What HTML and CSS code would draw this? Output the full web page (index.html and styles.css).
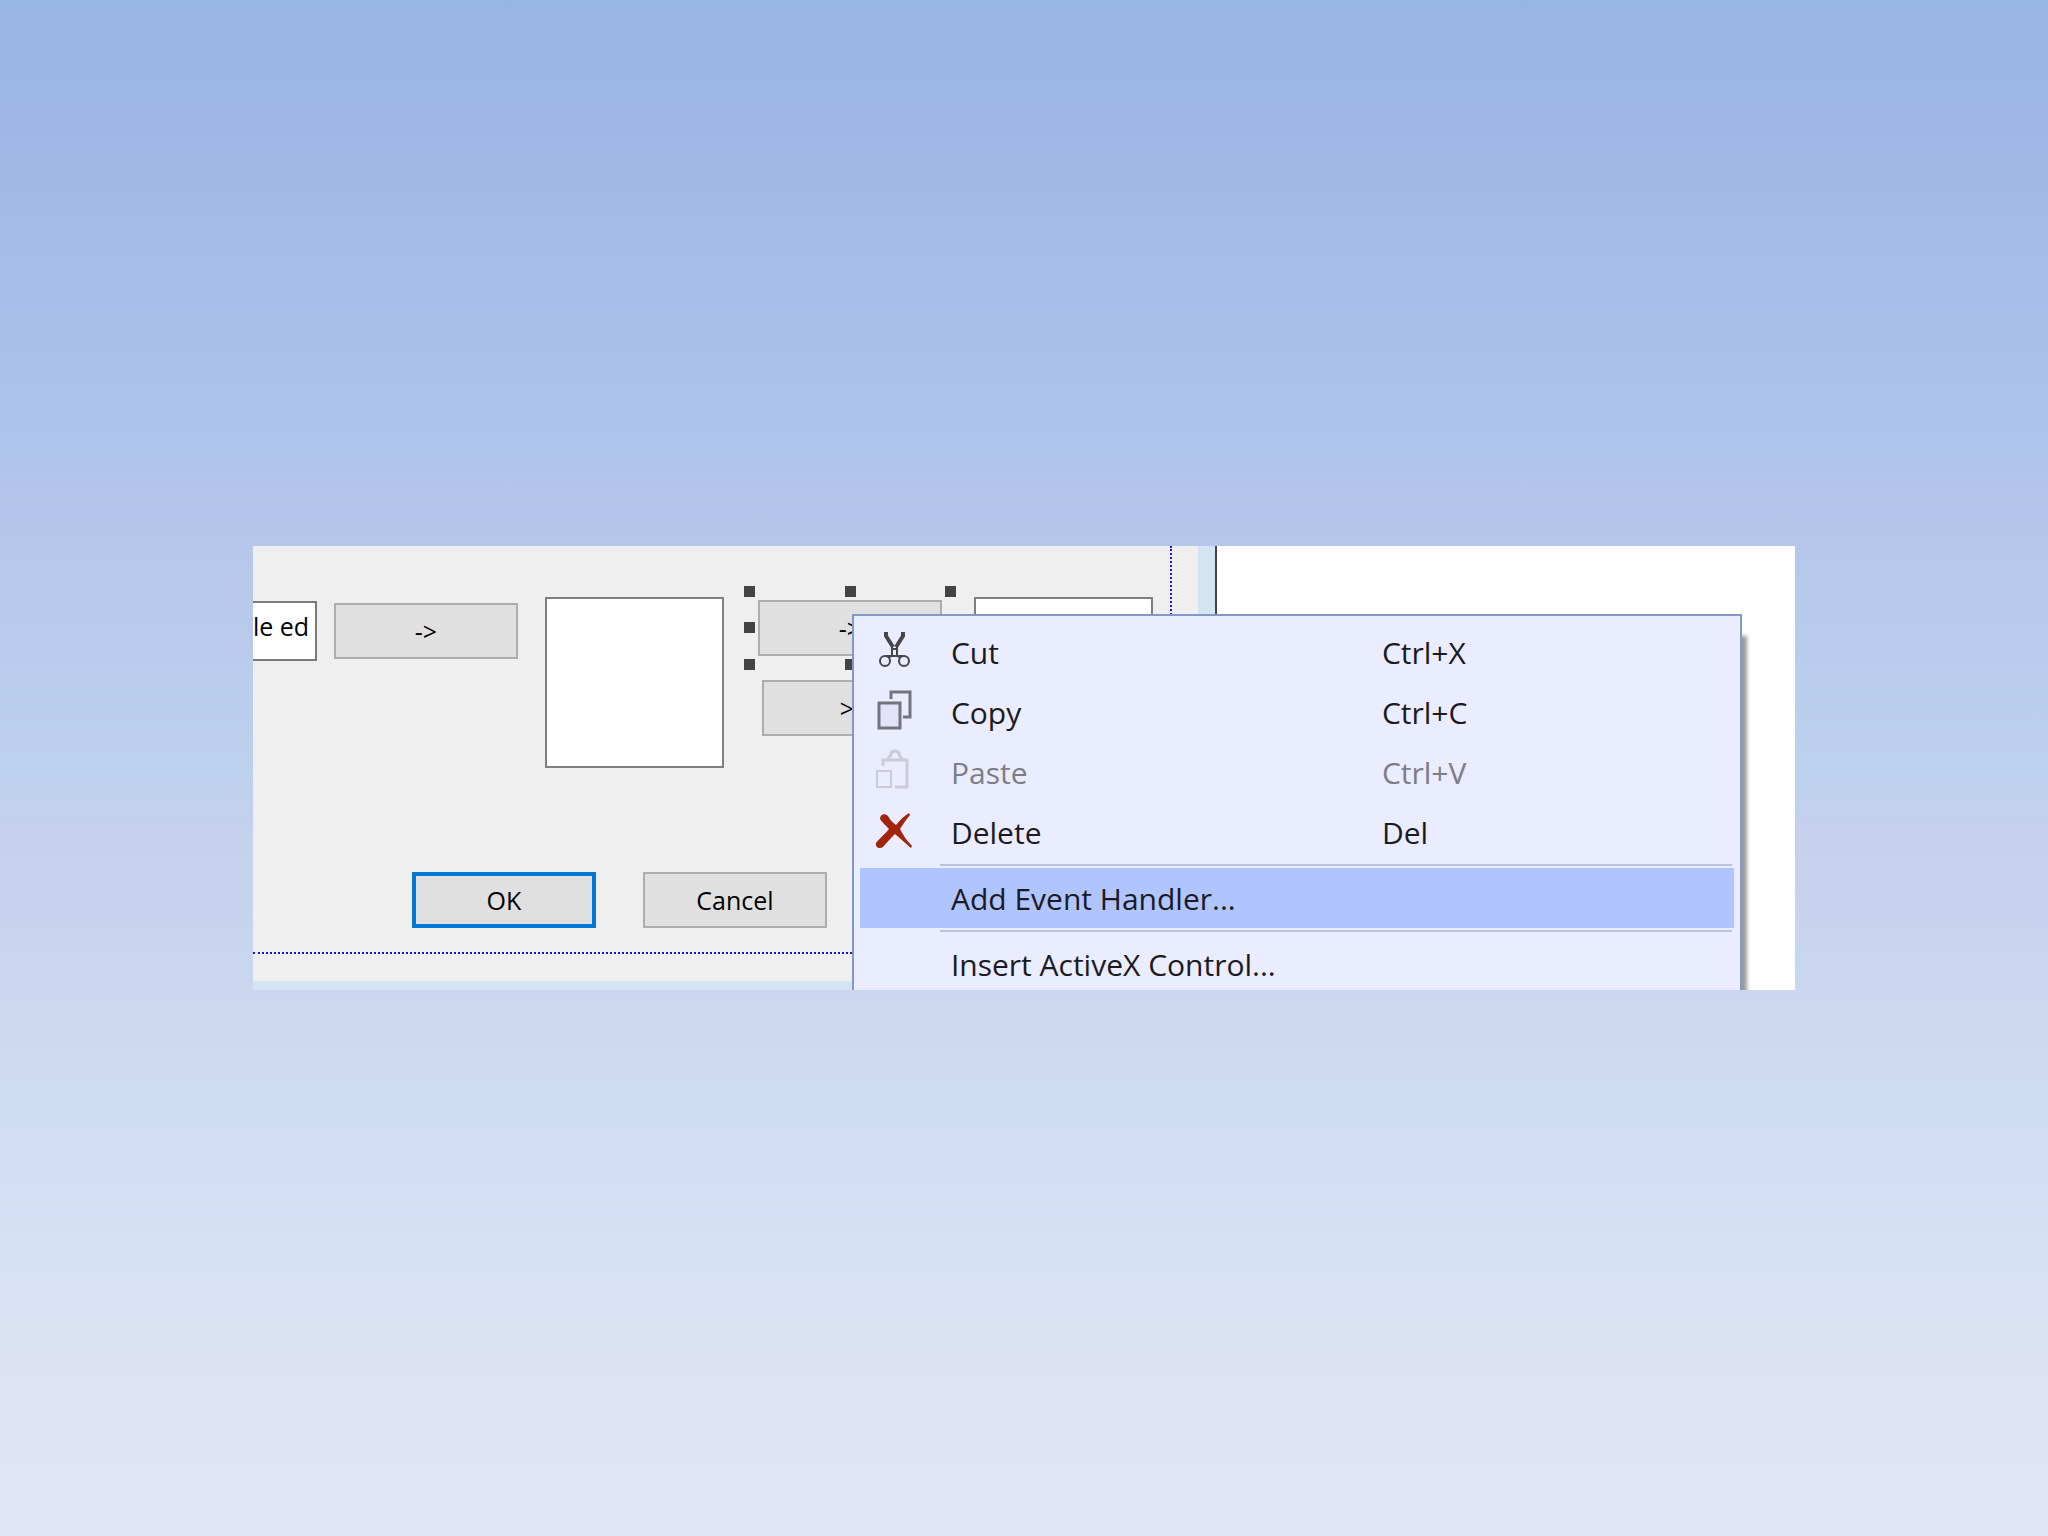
FILE: index.html
```html
<!DOCTYPE html>
<html lang="en">

<head>
	<meta charset="UTF-8" />
	<meta name="viewport" content="width=device-width, initial-scale=1.0" />
	<title>Dialog Editor</title>
	<link rel="stylesheet" href="styles.css">
</head>

<body>
	<main class="window">
		<section class="designer">
			<form class="dialog">
				<div class="guides">
					<div class="controls">
						<input type="text" class="edit-box" aria-label="Sample edit" value="le ed" />
						<button type="button" class="dialog-button move-button">-&gt;</button>
						<div class="list-box"></div>
						<div class="button-stack">
							<div class="selection">
								<button type="button" class="dialog-button">-&gt;</button>
								<span class="handle top left"></span>
								<span class="handle top center"></span>
								<span class="handle top right"></span>
								<span class="handle middle left"></span>
								<span class="handle middle right"></span>
								<span class="handle bottom left"></span>
								<span class="handle bottom center"></span>
								<span class="handle bottom right"></span>
							</div>
							<button type="button" class="dialog-button">&gt;&gt;</button>
						</div>
						<div class="list-box"></div>
					</div>
					<div class="dialog-actions">
						<button type="button" class="dialog-button default-button">OK</button>
						<button type="button" class="dialog-button">Cancel</button>
					</div>
				</div>
			</form>
		</section>
		<section class="editor"></section>

		<menu class="context-menu">
			<li>
				<button type="button" class="menu-item">
					<svg class="icon" viewBox="0 0 40 40" fill="none" stroke="#45454b">
						<path d="M11 0V4L18 15M28 0V4L21 15" stroke-width="4" />
						<path d="M17 15V24L14 25M22 15V24L25 25M17 17H22M11 24H28" stroke-width="2" />
						<circle cx="10" cy="29" r="5" stroke-width="2" />
						<circle cx="29" cy="29" r="5" stroke-width="2" />
					</svg>
					<span>Cut</span>
					<span>Ctrl+X</span>
				</button>
			</li>
			<li>
				<button type="button" class="menu-item">
					<svg class="icon" viewBox="0 0 40 40" stroke="#74747d" stroke-width="3">
						<path d="M16 7V0H35V25H28" fill="none" />
						<rect x="4" y="11" width="21" height="25" fill="#e3e2fb" />
					</svg>
					<span>Copy</span>
					<span>Ctrl+C</span>
				</button>
			</li>
			<li>
				<button type="button" class="menu-item" disabled>
					<svg class="icon" viewBox="0 0 40 40" fill="none" stroke="#cbcbd6" stroke-width="2">
						<path d="M8 14V8H32V35H20" stroke-width="3" />
						<path d="M13 7C14 4 16 5 16 2C16 -2 24 -2 24 2C24 5 26 4 27 7" stroke-width="3" />
						<rect x="2" y="19" width="14" height="16" />
					</svg>
					<span>Paste</span>
					<span>Ctrl+V</span>
				</button>
			</li>
			<li>
				<button type="button" class="menu-item">
					<svg class="icon" viewBox="0 0 40 40" fill="#a3240c">
						<path d="M5 7C5 2 10 1 13 4C15 8 18 11 21 13C25 8 29 4 34 1L35 3C31 8 28 12 25 17C28 23 32 29 37 34L36 36C30 31 25 26 20 22C16 26 12 30 8 35C5 37 0 36 1 31C3 28 10 22 14 17C11 14 7 10 5 7Z" />
					</svg>
					<span>Delete</span>
					<span>Del</span>
				</button>
			</li>
			<li class="separator"></li>
			<li>
				<button type="button" class="menu-item highlighted">
					<span class="icon"></span>
					<span>Add Event Handler...</span>
				</button>
			</li>
			<li class="separator"></li>
			<li>
				<button type="button" class="menu-item">
					<span class="icon"></span>
					<span>Insert ActiveX Control...</span>
				</button>
			</li>
		</menu>
	</main>
</body>

</html>
```
FILE: styles.css
```css
* {
	box-sizing: border-box;
}

body {
	margin: 0;
	min-height: 100vh;
	display: flex;
	justify-content: center;
	align-items: center;
	font-family: "Open Sans", "Noto Sans", sans-serif;
	background: linear-gradient(#98b4e5 0%, #9fb6e6 8%, #adc5ec 29%, #b4c4ea 32%, #bcd1ee 50%, #c5d0ed 54%, #cedcf1 72%, #d5e1f5 81%, #dce2f3 89%, #e1e6f6 100%);
}

button,
input {
	font-family: inherit;
	margin: 0;
}

.window {
	position: relative;
	display: flex;
	width: 75.3%;
	overflow: hidden;
	background-color: #fff;
}

/* dialog designer */
.designer {
	flex: none;
	padding: 0 17px 9px 0;
	background-color: #d5e4f2;
	border-right: 2px solid #444;
}

.editor {
	flex: 1;
	background-color: #fff;
}

.dialog {
	padding: 0 26px 27px 0;
	background-color: #f0eff0;
}

.guides {
	padding: 51px 17px 24px 0;
	border-right: 2px dotted #1a10dc;
	border-bottom: 2px dotted #1a10dc;
}

.controls {
	display: flex;
	align-items: flex-start;
}

.edit-box {
	width: 64px;
	height: 60px;
	margin-top: 4px;
	padding: 0 0 10px;
	border: 2px solid #7a7a7a;
	border-left: none;
	border-radius: 0;
	background-color: #fff;
	color: #000;
	font-size: 25px;
}

.dialog-button {
	width: 184px;
	height: 56px;
	padding: 0;
	border: 2px solid #adadad;
	background-color: #e1e0e1;
	color: #000;
	font-size: 25px;
}

.move-button {
	margin: 6px 27px 0 17px;
}

.list-box {
	width: 179px;
	height: 171px;
	border: 2px solid #7f7f82;
	background-color: #fff;
}

.button-stack {
	display: flex;
	flex-direction: column;
	align-items: flex-end;
	gap: 24px;
	margin: 3px 28px 0 34px;
}

.selection {
	position: relative;
	display: flex;
	margin-right: 4px;
}

.handle {
	position: absolute;
	width: 11px;
	height: 11px;
	background-color: #434343;
}

.top {
	top: -14px;
}

.middle {
	top: 22px;
}

.bottom {
	bottom: -14px;
}

.left {
	left: -14px;
}

.center {
	left: 87px;
}

.right {
	right: -14px;
}

.dialog-actions {
	display: flex;
	gap: 47px;
	margin-top: 104px;
	padding-left: 159px;
}

.default-button {
	border: 4px solid #0078d7;
}

/* context menu */
.context-menu {
	position: absolute;
	top: 68px;
	left: 599px;
	right: 53px;
	margin: 0;
	padding: 6px;
	list-style: none;
	border: 2px solid #8199c4;
	background-color: #eaecff;
	box-shadow: 5px 22px 4px rgba(0, 0, 0, 0.4);
}

.menu-item {
	display: grid;
	grid-template-columns: 40px 395px 1fr;
	column-gap: 36px;
	align-items: center;
	width: 100%;
	height: 60px;
	padding: 0 15px;
	border: none;
	background-color: transparent;
	color: #1b1b1f;
	font-size: 30px;
	text-align: left;
}

.menu-item:disabled {
	color: #7d7d86;
}

.menu-item.highlighted {
	background-color: #b0c4ff;
}

.icon {
	width: 40px;
	height: 40px;
	overflow: visible;
}

.separator {
	height: 2px;
	margin: 2px 2px 2px 80px;
	background-color: #b9c3de;
}
```
